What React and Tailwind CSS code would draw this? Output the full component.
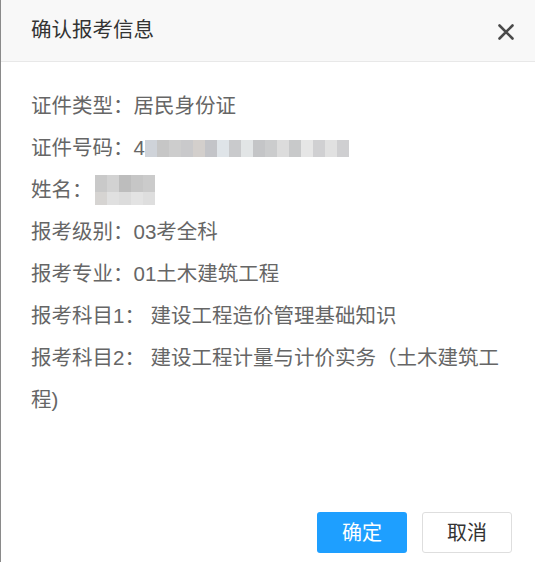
import React from 'react'

const idBlocks = ['#cfd3d9', '#c6c6c6', '#cdcdcd', '#c9c9cb', '#d3cfcc', '#c3c4c8', '#dfe4e8', '#c9cacc', '#e2e5e6', '#c4c5c7', '#cbcccd', '#dcdcdc', '#c8c9ca', '#e6e6e6', '#d0d0d2', '#e1e1e1', '#cfcfd1']
const nameTop = ['#c9c9c9', '#d2d2d2', '#bdbdbd', '#c6c6c6', '#cbcbcb']
const nameBottom = ['#d6d4d2', '#e0e0e0', '#dcdcdc', '#e3e3e3', '#dedede']

const Mosaic = ({ blocks }) => (
    <span className="inline-flex align-middle h-[17px] -mt-[3px]">
        {blocks.map((c, i) => (
            <span key={i} className="w-[12px] h-full" style={{ backgroundColor: c }} />
        ))}
    </span>
)

const Row = ({ children }) => <div className="leading-[42px]">{children}</div>

export default function App() {
    return (
        <div
            className="w-[535px] h-[562px] bg-white flex flex-col border-l border-[#8a8a8a] overflow-hidden"
            style={{ fontFamily: '"Liberation Sans", "Noto Sans CJK SC", sans-serif' }}
        >
            <div className="h-[62px] shrink-0 bg-[#f8f8f8] border-b border-[#e8e8e8] flex items-center justify-between pl-[30px] pr-[20px]">
                <span className="text-[20.5px] text-[#333]">确认报考信息</span>
                <button className="w-[18px] h-[18px] flex items-center justify-center text-[#4a4a4a] mt-[2px]">
                    <svg width="18" height="18" viewBox="0 0 18 18">
                        <path d="M2.5 2.5 L15.5 15.5 M15.5 2.5 L2.5 15.5" stroke="currentColor" strokeWidth="2.6" strokeLinecap="round" />
                    </svg>
                </button>
            </div>

            <div className="flex-1 pl-[30px] pr-[20px] pt-[23px] text-[20.5px] text-[#666]">
                <Row>证件类型：居民身份证</Row>
                <Row>证件号码：4<Mosaic blocks={idBlocks} /></Row>
                <Row>
                    姓名：
                    <span className="inline-flex flex-col align-middle -mt-[4px] ml-[2px]">
                        <span className="flex h-[17px]">
                            {nameTop.map((c, i) => <span key={i} className="w-[12px] h-full" style={{ backgroundColor: c }} />)}
                        </span>
                        <span className="flex h-[13px]">
                            {nameBottom.map((c, i) => <span key={i} className="w-[12px] h-full" style={{ backgroundColor: c }} />)}
                        </span>
                    </span>
                </Row>
                <Row>报考级别：03考全科</Row>
                <Row>报考专业：01土木建筑工程</Row>
                <Row>报考科目1： 建设工程造价管理基础知识</Row>
                <Row>报考科目2： 建设工程计量与计价实务（土木建筑工程)</Row>
            </div>

            <div className="shrink-0 flex justify-end gap-[15px] pr-[23px] pb-[9px]">
                <button className="w-[90px] h-[41px] rounded-[3px] bg-[#1e9fff] text-white text-[20px]">确定</button>
                <button className="w-[90px] h-[41px] rounded-[3px] bg-white border border-[#dedede] text-[#333] text-[20px]">取消</button>
            </div>
        </div>
    )
}
